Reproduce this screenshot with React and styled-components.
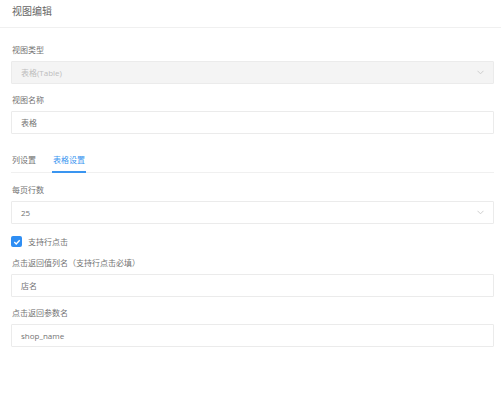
import React, { useState } from 'react'
import styled, { createGlobalStyle } from 'styled-components'

const GlobalStyle = createGlobalStyle`
    body {
        margin: 0;
        background: #fff;
        font-family: "Open Sans", "Noto Sans CJK SC", sans-serif;
        color: #666;
    }
`

const Header = styled.div`
    height: 28px;
    box-sizing: border-box;
    padding: 4px 12px 0;
    font-size: 10px;
    line-height: 14px;
    color: #666;
    border-bottom: 1px solid #f0f0f0;
`

const Form = styled.div`
    padding: 16px 7px 0 11px;
`

const Field = styled.div`
    margin-top: ${(p) => p.$top ?? 10}px;
`

const Label = styled.div`
    font-size: 8px;
    line-height: 12px;
    padding-left: 1px;
    margin-bottom: 5px;
    color: #737373;
`

const Box = styled.div`
    height: 23px;
    box-sizing: border-box;
    border: 1px solid #ebebeb;
    border-radius: 1px;
    background: ${(p) => (p.$disabled ? '#f4f4f4' : '#fff')};
    color: ${(p) => (p.$disabled ? '#bdbdbd' : '#737373')};
    font-size: 8px;
    line-height: 21px;
    padding: 0 9px;
    display: flex;
    align-items: center;
    justify-content: space-between;
`

const Chevron = styled.svg`
    width: 7px;
    height: 5px;
`

const Tabs = styled.div`
    margin-top: 16px;
    display: flex;
    gap: 15px;
    border-bottom: 1px solid #f0f0f0;
`

const Tab = styled.div`
    height: 23px;
    box-sizing: border-box;
    padding: 4px 1px 0;
    font-size: 8px;
    line-height: 12px;
    color: ${(p) => (p.$active ? '#3a95f0' : '#737373')};
    border-bottom: 2px solid ${(p) => (p.$active ? '#3a95f0' : 'transparent')};
    margin-bottom: -1px;
`

const CheckRow = styled.label`
    margin-top: 12px;
    display: flex;
    align-items: center;
    gap: 6px;
    font-size: 8px;
    line-height: 11px;
    color: #737373;
`

const CheckBox = styled.span`
    width: 11px;
    height: 11px;
    border-radius: 2px;
    background: #2f8ef3;
    display: flex;
    align-items: center;
    justify-content: center;
`

const Select = ({ value, disabled }) => (
    <Box $disabled={disabled}>
        <span>{value}</span>
        <Chevron viewBox="0 0 7 5">
            <path d="M0.5 0.8 L3.5 3.8 L6.5 0.8" fill="none" stroke="#c8c8c8" strokeWidth="0.9" />
        </Chevron>
    </Box>
)

const App = () => {
    const [tab, setTab] = useState(1)
    const tabs = ['列设置', '表格设置']

    return (
        <>
            <GlobalStyle />
            <Header>视图编辑</Header>
            <Form>
                <Field $top={0}>
                    <Label>视图类型</Label>
                    <Select value="表格(Table)" disabled />
                </Field>
                <Field>
                    <Label>视图名称</Label>
                    <Box>表格</Box>
                </Field>
                <Tabs>
                    {tabs.map((t, i) => (
                        <Tab key={t} $active={tab === i} onClick={() => setTab(i)}>{t}</Tab>
                    ))}
                </Tabs>
                <Field $top={11}>
                    <Label>每页行数</Label>
                    <Select value="25" />
                </Field>
                <CheckRow>
                    <CheckBox>
                        <svg width="8" height="8" viewBox="0 0 8 8">
                            <path d="M1.3 4.1 L3.2 5.9 L6.7 2.2" fill="none" stroke="#fff" strokeWidth="1.4" />
                        </svg>
                    </CheckBox>
                    支持行点击
                </CheckRow>
                <Field $top={10}>
                    <Label>点击返回值列名（支持行点击必填）</Label>
                    <Box>店名</Box>
                </Field>
                <Field>
                    <Label>点击返回参数名</Label>
                    <Box>shop_name</Box>
                </Field>
            </Form>
        </>
    )
}

export default App
